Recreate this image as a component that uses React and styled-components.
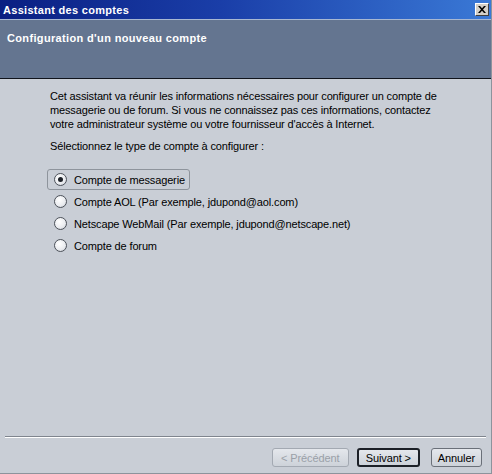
import React, { useState } from "react";
import styled, { createGlobalStyle } from "styled-components";

const GlobalStyle = createGlobalStyle`
  html, body {
    margin: 0;
    padding: 0;
    background: #c9ced6;
  }
  body {
    font-family: Tahoma, "Liberation Sans", "DejaVu Sans", sans-serif;
    font-size: 11px;
  }
`;

const Window = styled.div`
  width: 492px;
  height: 474px;
  display: flex;
  flex-direction: column;
  background: #c9ced6;
  box-sizing: border-box;
  border-right: 1px solid #8d939c;
  border-bottom: 1px solid #8d939c;
  overflow: hidden;
`;

const TitleBar = styled.div`
  height: 19px;
  display: flex;
  align-items: center;
  justify-content: space-between;
  padding: 0 2px 0 3px;
  background: linear-gradient(to right, #0a1f82 0%, #1a3ea8 45%, #3a79d6 100%);
  border-bottom: 1px solid #a8b8d2;
  color: #fff;
  font-weight: bold;
  font-size: 11px;
  letter-spacing: 0.3px;
`;

const CloseButton = styled.div`
  width: 14px;
  height: 13px;
  box-sizing: border-box;
  background: #d4d0c8;
  border: 1px solid;
  border-color: #fff #404040 #404040 #fff;
  display: flex;
  align-items: center;
  justify-content: center;
`;

const Banner = styled.div`
  height: 59px;
  background: #647590;
  border-bottom: 1px solid #10141c;
  padding: 12px 7px 0;
  box-sizing: border-box;
  color: #fff;
  font-weight: bold;
  font-size: 11px;
  letter-spacing: 0.35px;
`;

const Content = styled.div`
  flex: 1;
  padding: 10px 40px 0 50px;
  color: #000;
  letter-spacing: -0.14px;
`;

const Paragraph = styled.p`
  margin: 0;
  line-height: 14px;
`;

const Prompt = styled.p`
  margin: 8px 0 0;
  line-height: 14px;
`;

const Options = styled.div`
  margin-top: 16px;
  margin-left: -3px;
  display: flex;
  flex-direction: column;
  gap: 1px;
`;

const Option = styled.label`
  align-self: flex-start;
  display: flex;
  align-items: center;
  gap: 7px;
  height: 21px;
  padding: 0 4px 0 6px;
  box-sizing: border-box;
  border: 1px solid ${(p) => (p.$focused ? "#8e949c" : "transparent")};
  border-radius: 3px;
  cursor: default;
`;

const Radio = styled.span`
  width: 13px;
  height: 13px;
  box-sizing: border-box;
  border-radius: 50%;
  border: 1px solid #4d525a;
  background: radial-gradient(circle at 40% 35%, #ffffff 0%, #e9ebef 60%, #bfc5ce 100%);
  display: flex;
  align-items: center;
  justify-content: center;

  &::after {
    content: "";
    width: 5px;
    height: 5px;
    border-radius: 50%;
    background: ${(p) => (p.$checked ? "#1d2128" : "transparent")};
  }
`;

const Footer = styled.div`
  padding: 0 5px 6px 5px;
`;

const Separator = styled.div`
  height: 0;
  border-top: 1px solid #7f858e;
  border-bottom: 1px solid #ffffff;
  margin-bottom: 10px;
`;

const ButtonRow = styled.div`
  display: flex;
  justify-content: flex-end;
  align-items: center;
  padding-right: 4px;
`;

const Button = styled.button`
  height: 19px;
  min-width: ${(p) => p.$width || "62px"};
  margin-left: ${(p) => p.$gap || "0"};
  padding: 0 6px;
  font-family: inherit;
  font-size: 11px;
  letter-spacing: -0.1px;
  color: ${(p) => (p.disabled ? "#9aa0a8" : "#000")};
  background: linear-gradient(#e4e7ec, #cdd2d9);
  border: ${(p) => (p.$default ? "2px solid #1c2027" : "1px solid #6a7079")};
  border-color: ${(p) => (p.disabled ? "#a3a9b2" : undefined)};
  border-radius: 3px;
  box-sizing: border-box;
`;

const options = [
  "Compte de messagerie",
  "Compte AOL (Par exemple, jdupond@aol.com)",
  "Netscape WebMail (Par exemple, jdupond@netscape.net)",
  "Compte de forum",
];

export default function App() {
  const [selected, setSelected] = useState(0);

  return (
    <>
      <GlobalStyle />
      <Window>
        <TitleBar>
          <span>Assistant des comptes</span>
          <CloseButton>
            <svg width="8" height="7" viewBox="0 0 8 7">
              <path d="M0 0h2l2 2.2L6 0h2L5 3.5 8 7H6L4 4.8 2 7H0l3-3.5z" fill="#000" />
            </svg>
          </CloseButton>
        </TitleBar>
        <Banner>Configuration d'un nouveau compte</Banner>
        <Content>
          <Paragraph>
            Cet assistant va réunir les informations nécessaires pour configurer un compte de
            messagerie ou de forum. Si vous ne connaissez pas ces informations, contactez
            votre administrateur système ou votre fournisseur d'accès à Internet.
          </Paragraph>
          <Prompt>Sélectionnez le type de compte à configurer :</Prompt>
          <Options>
            {options.map((label, i) => (
              <Option key={label} $focused={i === selected} onClick={() => setSelected(i)}>
                <Radio $checked={i === selected} />
                {label}
              </Option>
            ))}
          </Options>
        </Content>
        <Footer>
          <Separator />
          <ButtonRow>
            <Button disabled $width="77px">&lt; Précédent</Button>
            <Button $default $width="63px" $gap="8px">Suivant &gt;</Button>
            <Button $width="48px" $gap="11px">Annuler</Button>
          </ButtonRow>
        </Footer>
      </Window>
    </>
  );
}
